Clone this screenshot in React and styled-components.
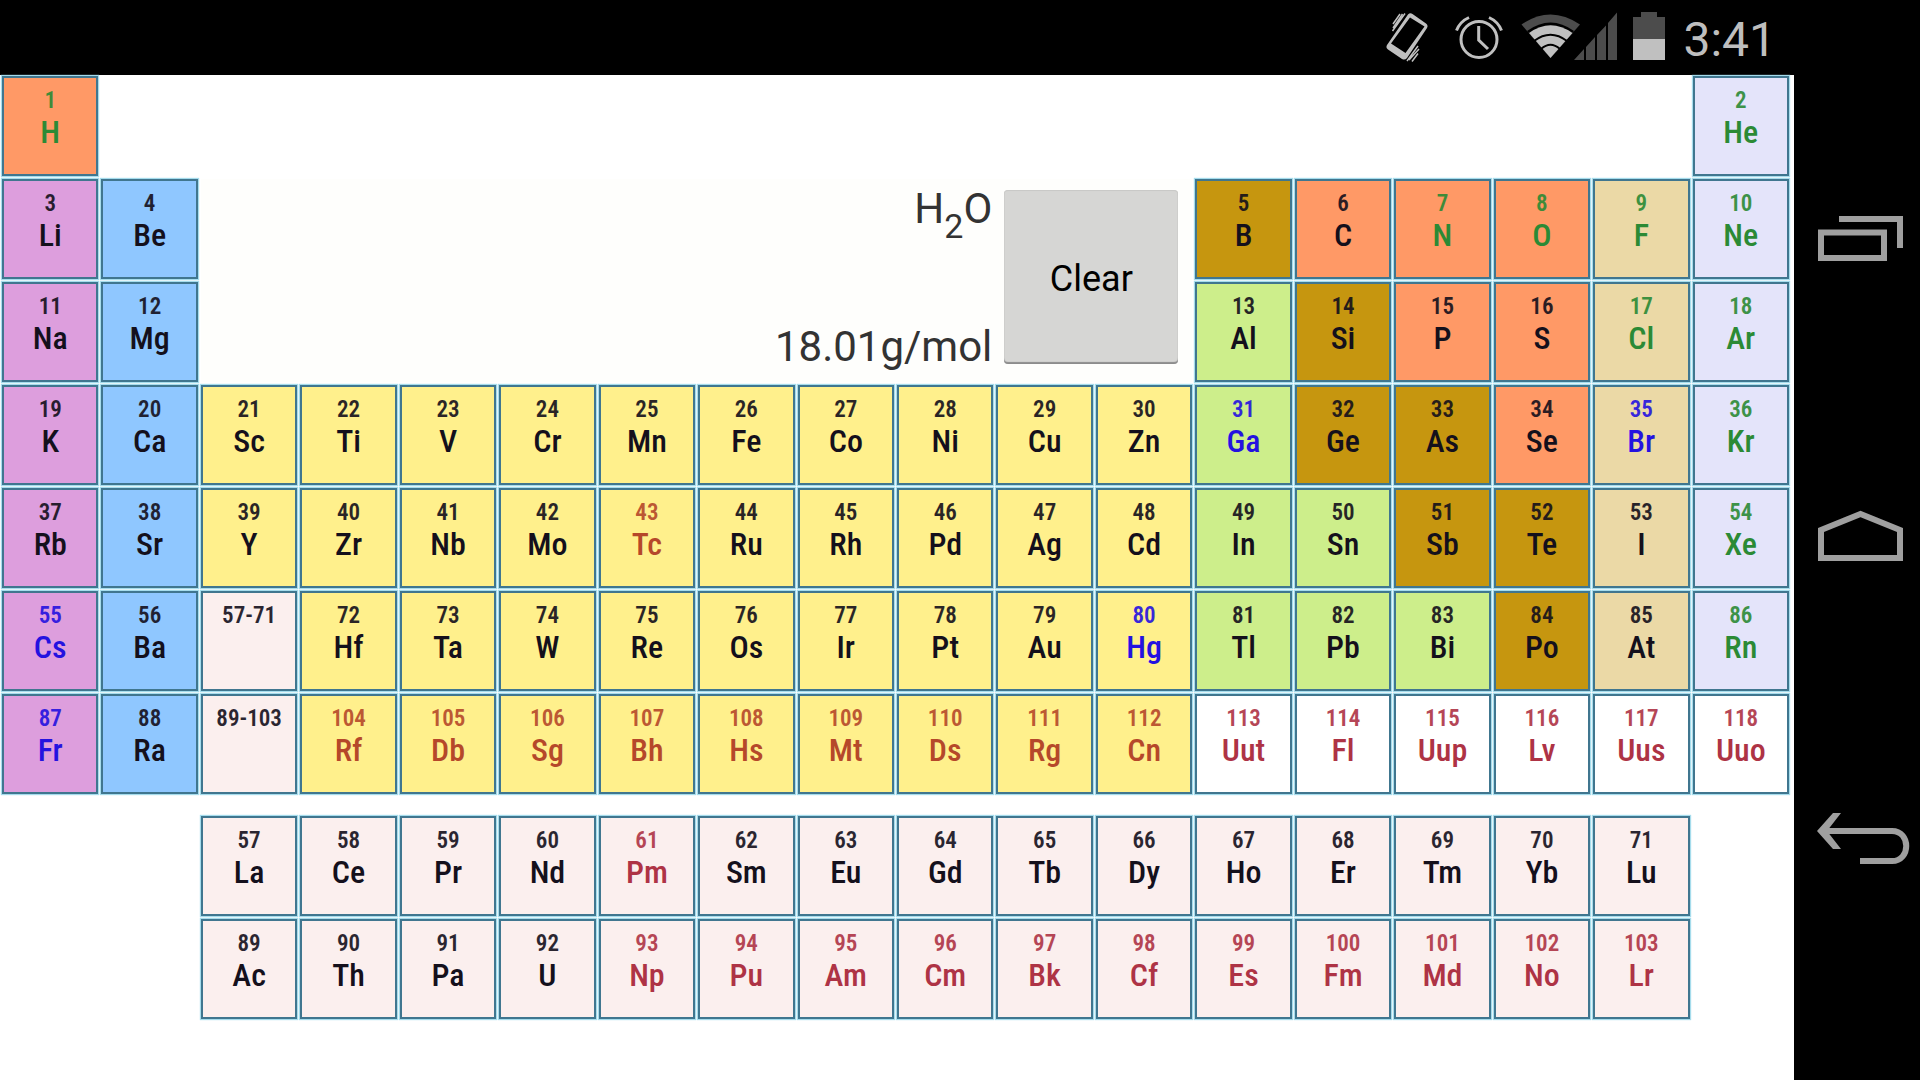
import React, { useState } from "react";
import styled, { createGlobalStyle } from "styled-components";

const GlobalStyle = createGlobalStyle`
  *, *::before, *::after { box-sizing: border-box; }
  html, body, #root { height: 100%; }
  body { margin: 0; background: #000; font-family: Roboto, "Liberation Sans", sans-serif; }
  button { font: inherit; margin: 0; padding: 0; border: 0; cursor: pointer; }
`;

const Screen = styled.div`
  display: grid;
  grid-template-columns: minmax(0, 1fr) 126px;
  min-height: 100%;
`;

const Main = styled.div`
  display: flex;
  flex-direction: column;
`;

const StatusBar = styled.header`
  display: flex;
  align-items: center;
  justify-content: flex-end;
  height: 75px;
  padding-right: 18px;
  background: #000;
  color: #bebebe;
`;

const StatusIcons = styled.svg`
  display: block;
  width: 304px;
  height: 75px;
`;

const Clock = styled.time`
  font-size: 48px;
  line-height: 56px;
  padding-top: 4px;
`;

const Content = styled.main`
  flex: 1;
  padding: 1px 5px 0 2px;
  background: #fff;
`;

const Table = styled.div`
  display: grid;
  grid-template-columns: repeat(18, minmax(0, 1fr));
  grid-template-rows: repeat(7, 100px) 16px repeat(2, 100px);
  gap: 3px;
`;

const fills = {
  nonmetal: "#ff9966",
  alkali: "#dd9edd",
  alkaline: "#8fc7ff",
  transition: "#fff08c",
  metal: "#cdee8b",
  metalloid: "#c6960f",
  halogen: "#ebd9a6",
  noble: "#e4e4fa",
  rare: "#fbefee",
  unknown: "#ffffff",
};

const Cell = styled.button`
  grid-column: ${(p) => p.$col};
  grid-row: ${(p) => p.$row};
  display: flex;
  flex-direction: column;
  align-items: center;
  padding-top: 9px;
  border: 2px solid #40768f;
  box-shadow: 0 0 1px 1px #a5dcec;
  background: ${(p) => fills[p.$kind]};
  color: ${(p) => p.$ink};
  font-family: "Liberation Sans Narrow", "Roboto Condensed", "Liberation Sans", sans-serif;
  font-weight: 600;
`;

const AtomicNumber = styled.span`
  font-size: 23px;
  line-height: 28px;
  opacity: 0.9;
`;

const ElementSymbol = styled.span`
  font-size: 32px;
  line-height: 34px;
  font-weight: 500;
`;

const Panel = styled.section`
  grid-column: 3 / 13;
  grid-row: 2 / 4;
  display: flex;
  justify-content: flex-end;
  gap: 12px;
  padding: 11px 14px 16px 0;
  background: #fefefc;
`;

const Readout = styled.div`
  display: flex;
  flex-direction: column;
  justify-content: space-between;
  align-items: flex-end;
  color: #333;
  font-size: 42px;
  line-height: 38px;
`;

const Formula = styled.output`
  height: 38px;

  sub {
    font-size: 34px;
    line-height: 0;
    vertical-align: -15px;
  }
`;

const ClearButton = styled.button`
  && {
    width: 174px;
    height: 174px;
    padding-top: 4px;
    border-radius: 4px;
    background: #d6d6d4;
    box-shadow: inset 0 -2px 1px #8c8c8c, inset 0 1px 1px #c8c8c6;
    color: #000;
    font-size: 36px;
  }
`;

const NavBar = styled.nav`
  display: flex;
  flex-direction: column;
  justify-content: center;
  background: #000;
`;

const NavButton = styled.button`
  display: grid;
  place-items: center;
  height: 300px;
  background: #000;
`;

const NavIcon = styled.svg`
  display: block;
  width: 126px;
  height: 100px;
  fill: none;
  stroke: #9f9f9f;
  stroke-width: 6;
`;

const GREEN = "#2b8a35";
const BLUE = "#2412e0";
const RED = "#ae3345";
const RUST = "#b5482a";
const BLACK = "#14101c";

const green = new Set([1, 2, 7, 8, 9, 10, 17, 18, 36, 54, 86]);
const blue = new Set([31, 35, 55, 80, 87]);

function inkFor(number, kind) {
  if (green.has(number)) return GREEN;
  if (blue.has(number)) return BLUE;
  if (number === 43 || number === 61 || number >= 93) {
    return kind === "transition" ? RUST : RED;
  }
  return BLACK;
}

// Each run: row, first column, first atomic number, kind, symbols.
const runs = [
  [1, 1, 1, "nonmetal", "H"],
  [1, 18, 2, "noble", "He"],
  [2, 1, 3, "alkali", "Li"],
  [2, 2, 4, "alkaline", "Be"],
  [2, 13, 5, "metalloid", "B"],
  [2, 14, 6, "nonmetal", "C N O"],
  [2, 17, 9, "halogen", "F"],
  [2, 18, 10, "noble", "Ne"],
  [3, 1, 11, "alkali", "Na"],
  [3, 2, 12, "alkaline", "Mg"],
  [3, 13, 13, "metal", "Al"],
  [3, 14, 14, "metalloid", "Si"],
  [3, 15, 15, "nonmetal", "P S"],
  [3, 17, 17, "halogen", "Cl"],
  [3, 18, 18, "noble", "Ar"],
  [4, 1, 19, "alkali", "K"],
  [4, 2, 20, "alkaline", "Ca"],
  [4, 3, 21, "transition", "Sc Ti V Cr Mn Fe Co Ni Cu Zn"],
  [4, 13, 31, "metal", "Ga"],
  [4, 14, 32, "metalloid", "Ge As"],
  [4, 16, 34, "nonmetal", "Se"],
  [4, 17, 35, "halogen", "Br"],
  [4, 18, 36, "noble", "Kr"],
  [5, 1, 37, "alkali", "Rb"],
  [5, 2, 38, "alkaline", "Sr"],
  [5, 3, 39, "transition", "Y Zr Nb Mo Tc Ru Rh Pd Ag Cd"],
  [5, 13, 49, "metal", "In Sn"],
  [5, 15, 51, "metalloid", "Sb Te"],
  [5, 17, 53, "halogen", "I"],
  [5, 18, 54, "noble", "Xe"],
  [6, 1, 55, "alkali", "Cs"],
  [6, 2, 56, "alkaline", "Ba"],
  [6, 4, 72, "transition", "Hf Ta W Re Os Ir Pt Au Hg"],
  [6, 13, 81, "metal", "Tl Pb Bi"],
  [6, 16, 84, "metalloid", "Po"],
  [6, 17, 85, "halogen", "At"],
  [6, 18, 86, "noble", "Rn"],
  [7, 1, 87, "alkali", "Fr"],
  [7, 2, 88, "alkaline", "Ra"],
  [7, 4, 104, "transition", "Rf Db Sg Bh Hs Mt Ds Rg Cn"],
  [7, 13, 113, "unknown", "Uut Fl Uup Lv Uus Uuo"],
  [9, 3, 57, "rare", "La Ce Pr Nd Pm Sm Eu Gd Tb Dy Ho Er Tm Yb Lu"],
  [10, 3, 89, "rare", "Ac Th Pa U Np Pu Am Cm Bk Cf Es Fm Md No Lr"],
];

const elements = runs.flatMap(([row, col, first, kind, symbols]) =>
  symbols.split(" ").map((symbol, i) => ({
    row,
    col: col + i,
    number: first + i,
    kind,
    symbol,
  }))
);

const ranges = [
  { row: 6, label: "57-71" },
  { row: 7, label: "89-103" },
];

function StatusGlyphs() {
  return (
    <StatusIcons viewBox="1379 0 304 75" aria-hidden="true">
      {/* vibrate */}
      <path
        fill="#c0c0c0"
        fillRule="evenodd"
        d="M1408 14.500Q1410 12.500 1412.500 14L1426 23.500Q1428.500 25.500 1427 28L1407 58Q1405 60.500 1402 59L1388 49.500Q1385.500 47.500 1387 45ZM1410 17.500L1391 43.500L1405.500 53L1424.500 26.500Z"
      />
      <path
        fill="none"
        stroke="#c0c0c0"
        strokeWidth="1.500"
        d="M1393 24L1400 14M1392.500 31L1405 13.500M1407 61L1418 46M1412 61.500L1418 53.500M1393 28L1402.500 14M1409 60L1419 49"
      />
      {/* alarm */}
      <g fill="none" stroke="#c0c0c0">
        <circle cx="1479" cy="39.500" r="18" strokeWidth="3" />
        <path strokeWidth="3" d="M1456.500 30.500Q1460 21.500 1469 17.500M1501.500 30.500Q1498 21.500 1489 17.500" />
        <path strokeWidth="3" d="M1478.700 26V40L1488 49" />
      </g>
      {/* wi-fi */}
      <path fill="#4c4c4c" d="M1521.500 24.500Q1550.500 4.500 1580 24.500L1550.500 58Z" />
      <path fill="#000" d="M1527 31Q1550.500 14 1574 31L1550.500 58Z" />
      <path fill="#c0c0c0" d="M1529 33Q1550.500 17.500 1572.500 33L1550.500 58Z" />
      <g fill="none" stroke="#000" strokeWidth="2">
        <path d="M1534 41Q1550.500 28.500 1567 41M1541 49Q1550.500 40.500 1560 49" />
      </g>
      {/* signal */}
      <path fill="#4c4c4c" d="M1574 60L1584 49V60ZM1586 60V47L1595 37V60ZM1597 60V35L1606 25.500V60ZM1608 60V23L1617 12.500V60Z" />
      {/* battery */}
      <path fill="#4c4c4c" d="M1633 39V17H1641V12H1657V17H1665V39Z" />
      <path fill="#c0c0c0" d="M1633 39H1665V60H1633Z" />
    </StatusIcons>
  );
}

export default function App() {
  const [atoms, setAtoms] = useState([
    { symbol: "H", count: 2 },
    { symbol: "O", count: 1 },
  ]);

  const add = (symbol) =>
    setAtoms((list) => {
      const last = list[list.length - 1];
      return last && last.symbol === symbol
        ? [...list.slice(0, -1), { symbol, count: last.count + 1 }]
        : [...list, { symbol, count: 1 }];
    });

  return (
    <Screen>
      <GlobalStyle />
      <Main>
        <StatusBar>
          <StatusGlyphs />
          <Clock>3:41</Clock>
        </StatusBar>
        <Content>
          <Table>
            {elements.map((el) => (
              <Cell
                key={el.number}
                type="button"
                $row={el.row}
                $col={el.col}
                $kind={el.kind}
                $ink={inkFor(el.number, el.kind)}
                onClick={() => add(el.symbol)}
              >
                <AtomicNumber>{el.number}</AtomicNumber>
                <ElementSymbol>{el.symbol}</ElementSymbol>
              </Cell>
            ))}
            {ranges.map((r) => (
              <Cell as="div" key={r.label} $row={r.row} $col={3} $kind="rare" $ink={BLACK}>
                <AtomicNumber>{r.label}</AtomicNumber>
              </Cell>
            ))}
            <Panel>
              <Readout>
                <Formula>
                  {atoms.map((a, i) => (
                    <React.Fragment key={i}>
                      {a.symbol}
                      {a.count > 1 && <sub>{a.count}</sub>}
                    </React.Fragment>
                  ))}
                </Formula>
                <output>{atoms.length ? "18.01g/mol" : ""}</output>
              </Readout>
              <ClearButton type="button" onClick={() => setAtoms([])}>
                Clear
              </ClearButton>
            </Panel>
          </Table>
        </Content>
      </Main>
      <NavBar>
        <NavButton type="button" aria-label="Recent apps">
          <NavIcon viewBox="0 0 126 100">
            <path d="M27 42.500H90V68H27ZM45 29H106V58" />
          </NavIcon>
        </NavButton>
        <NavButton type="button" aria-label="Home">
          <NavIcon viewBox="0 0 126 100">
            <path d="M27 68V40L66.500 24L106 40V68Z" />
          </NavIcon>
        </NavButton>
        <NavButton type="button" aria-label="Back">
          <NavIcon viewBox="0 0 126 100">
            <path d="M32 41H98C117 41 117 71 98 71H66" />
            <path fill="#9f9f9f" stroke="none" d="M23 41L39 23H47L33 41L47 59H39Z" />
          </NavIcon>
        </NavButton>
      </NavBar>
    </Screen>
  );
}
